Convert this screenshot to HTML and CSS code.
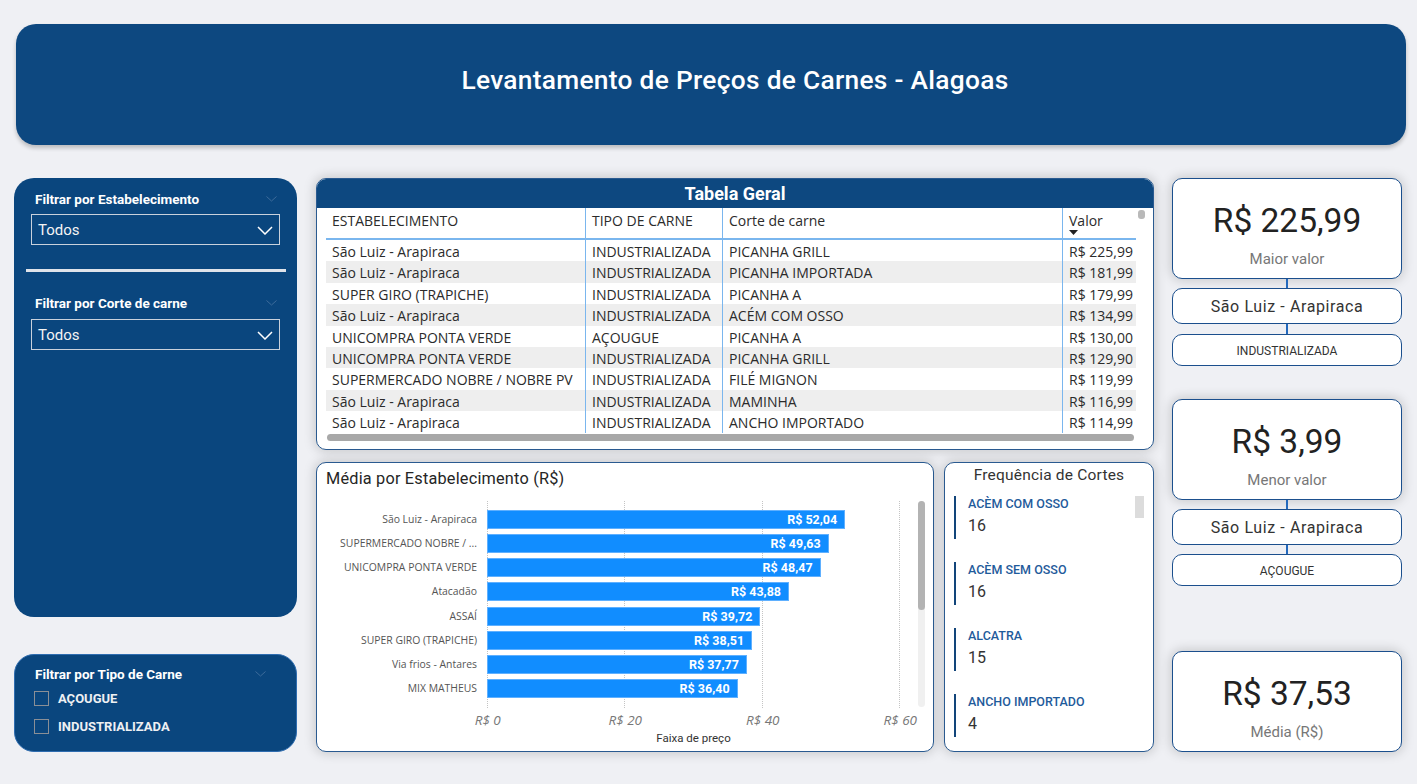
FILE: index.html
```html
<!DOCTYPE html>
<html lang="pt-BR">
<head>
<meta charset="utf-8">
<title>Levantamento de Preços de Carnes - Alagoas</title>
<link rel="stylesheet" href="styles.css">
</head>
<body>
<div class="page">
  <header class="banner">
    <h1>Levantamento de Preços de Carnes - Alagoas</h1>
  </header>

  <main class="main">
    <aside class="left">
      <section class="panel filters">
        <div class="slicer">
          <div class="slicer-head">
            <span>Filtrar por Estabelecimento</span>
            <svg class="faint-chev" width="11" height="6" viewBox="0 0 11 6"><polyline points="0.5,0.5 5.5,5 10.5,0.5" fill="none" stroke="#3d6b9b" stroke-width="1"/></svg>
          </div>
          <div class="dropdown">
            <span>Todos</span>
            <svg width="16" height="9" viewBox="0 0 16 9"><polyline points="1,1 8,8 15,1" fill="none" stroke="#ffffff" stroke-width="1.5"/></svg>
          </div>
        </div>
        <div class="sep"></div>
        <div class="slicer">
          <div class="slicer-head second">
            <span>Filtrar por Corte de carne</span>
            <svg class="faint-chev" width="11" height="6" viewBox="0 0 11 6"><polyline points="0.5,0.5 5.5,5 10.5,0.5" fill="none" stroke="#3d6b9b" stroke-width="1"/></svg>
          </div>
          <div class="dropdown">
            <span>Todos</span>
            <svg width="16" height="9" viewBox="0 0 16 9"><polyline points="1,1 8,8 15,1" fill="none" stroke="#ffffff" stroke-width="1.5"/></svg>
          </div>
        </div>
      </section>

      <section class="panel types">
        <div class="slicer-head types-head">
          <span>Filtrar por Tipo de Carne</span>
          <svg class="faint-chev" width="11" height="6" viewBox="0 0 11 6"><polyline points="0.5,0.5 5.5,5 10.5,0.5" fill="none" stroke="#3d6b9b" stroke-width="1"/></svg>
        </div>
        <label class="option"><span class="check"></span>AÇOUGUE</label>
        <label class="option"><span class="check"></span>INDUSTRIALIZADA</label>
      </section>
    </aside>

    <div class="center">
      <section class="card table-card">
        <div class="table-title">Tabela Geral</div>
        <div class="table-wrap">
          <div class="grid-table">
            <div class="row head">
              <div class="c c1">ESTABELECIMENTO</div>
              <div class="c c2">TIPO DE CARNE</div>
              <div class="c c3">Corte de carne</div>
              <div class="c c4 valor-head">Valor<svg class="sort" width="9" height="5" viewBox="0 0 9 5"><polygon points="0,0 9,0 4.5,5" fill="#222"/></svg></div>
            </div>
            <div class="row"><div class="c c1">São Luiz - Arapiraca</div><div class="c c2">INDUSTRIALIZADA</div><div class="c c3">PICANHA GRILL</div><div class="c c4">R$ 225,99</div></div>
            <div class="row"><div class="c c1">São Luiz - Arapiraca</div><div class="c c2">INDUSTRIALIZADA</div><div class="c c3">PICANHA IMPORTADA</div><div class="c c4">R$ 181,99</div></div>
            <div class="row"><div class="c c1">SUPER GIRO (TRAPICHE)</div><div class="c c2">INDUSTRIALIZADA</div><div class="c c3">PICANHA A</div><div class="c c4">R$ 179,99</div></div>
            <div class="row"><div class="c c1">São Luiz - Arapiraca</div><div class="c c2">INDUSTRIALIZADA</div><div class="c c3">ACÉM COM OSSO</div><div class="c c4">R$ 134,99</div></div>
            <div class="row"><div class="c c1">UNICOMPRA PONTA VERDE</div><div class="c c2">AÇOUGUE</div><div class="c c3">PICANHA A</div><div class="c c4">R$ 130,00</div></div>
            <div class="row"><div class="c c1">UNICOMPRA PONTA VERDE</div><div class="c c2">INDUSTRIALIZADA</div><div class="c c3">PICANHA GRILL</div><div class="c c4">R$ 129,90</div></div>
            <div class="row"><div class="c c1">SUPERMERCADO NOBRE / NOBRE PV</div><div class="c c2">INDUSTRIALIZADA</div><div class="c c3">FILÉ MIGNON</div><div class="c c4">R$ 119,99</div></div>
            <div class="row"><div class="c c1">São Luiz - Arapiraca</div><div class="c c2">INDUSTRIALIZADA</div><div class="c c3">MAMINHA</div><div class="c c4">R$ 116,99</div></div>
            <div class="row"><div class="c c1">São Luiz - Arapiraca</div><div class="c c2">INDUSTRIALIZADA</div><div class="c c3">ANCHO IMPORTADO</div><div class="c c4">R$ 114,99</div></div>
            <div class="hscroll"></div>
          </div>
          <div class="vthumb"></div>
        </div>
      </section>

      <div class="bottom-row">
        <section class="card chart-card">
          <div class="chart-title">Média por Estabelecimento (R$)</div>
          <div class="chart-body">
            <div class="ylabels">
              <div class="ylabel">São Luiz - Arapiraca</div>
              <div class="ylabel">SUPERMERCADO NOBRE / ...</div>
              <div class="ylabel">UNICOMPRA PONTA VERDE</div>
              <div class="ylabel">Atacadão</div>
              <div class="ylabel">ASSAÍ</div>
              <div class="ylabel">SUPER GIRO (TRAPICHE)</div>
              <div class="ylabel">Via frios - Antares</div>
              <div class="ylabel">MIX MATHEUS</div>
            </div>
            <div class="plot">
              <span class="gl g0"></span><span class="gl g1"></span><span class="gl g2"></span><span class="gl g3"></span>
              <div class="bars">
                <div class="bar-row"><div class="bar" style="width:86.73%">R$ 52,04</div></div>
                <div class="bar-row"><div class="bar" style="width:82.72%">R$ 49,63</div></div>
                <div class="bar-row"><div class="bar" style="width:80.78%">R$ 48,47</div></div>
                <div class="bar-row"><div class="bar" style="width:73.13%">R$ 43,88</div></div>
                <div class="bar-row"><div class="bar" style="width:66.20%">R$ 39,72</div></div>
                <div class="bar-row"><div class="bar" style="width:64.18%">R$ 38,51</div></div>
                <div class="bar-row"><div class="bar" style="width:62.95%">R$ 37,77</div></div>
                <div class="bar-row"><div class="bar" style="width:60.67%">R$ 36,40</div></div>
              </div>
            </div>
            <div class="vscroll"><div class="vscroll-thumb"></div></div>
            <div class="xaxis">
              <span>R$ 0</span><span>R$ 20</span><span>R$ 40</span><span>R$ 60</span>
            </div>
            <div class="xtitle">Faixa de preço</div>
          </div>
        </section>

        <section class="card freq-card">
          <div class="freq-title">Frequência de Cortes</div>
          <div class="freq-body">
            <div class="freq-list">
              <div class="freq-item"><div class="freq-label">ACÈM COM OSSO</div><div class="freq-value">16</div></div>
              <div class="freq-item"><div class="freq-label">ACÈM SEM OSSO</div><div class="freq-value">16</div></div>
              <div class="freq-item"><div class="freq-label">ALCATRA</div><div class="freq-value">15</div></div>
              <div class="freq-item"><div class="freq-label">ANCHO IMPORTADO</div><div class="freq-value">4</div></div>
            </div>
            <div class="freq-thumb"></div>
          </div>
        </section>
      </div>
    </div>

    <aside class="right">
      <div class="kpi-group">
        <div class="card kpi">
          <div class="kpi-value">R$ 225,99</div>
          <div class="kpi-label">Maior valor</div>
        </div>
        <div class="link"></div>
        <div class="card pill big">São Luiz - Arapiraca</div>
        <div class="link tall"></div>
        <div class="card pill small">INDUSTRIALIZADA</div>
      </div>

      <div class="kpi-group g2">
        <div class="card kpi">
          <div class="kpi-value">R$ 3,99</div>
          <div class="kpi-label">Menor valor</div>
        </div>
        <div class="link"></div>
        <div class="card pill big">São Luiz - Arapiraca</div>
        <div class="link"></div>
        <div class="card pill small">AÇOUGUE</div>
      </div>

      <div class="kpi-group g3">
        <div class="card kpi">
          <div class="kpi-value">R$ 37,53</div>
          <div class="kpi-label">Média (R$)</div>
        </div>
      </div>
    </aside>
  </main>
</div>
</body>
</html>
```
FILE: styles.css
```css
* { box-sizing: border-box; }

body {
  margin: 0;
  background: #eff0f4;
  font-family: Roboto, "Liberation Sans", sans-serif;
  color: #252525;
}

.page {
  width: 1417px;
  height: 784px;
  padding: 24px 0 0 14px;
  overflow: hidden;
}

/* ---------- banner ---------- */
.banner {
  margin-left: 2px;
  width: 1390px;
  height: 121px;
  background: #0d4880;
  border-radius: 20px;
  box-shadow: 0 3px 4px rgba(0, 0, 0, 0.22);
  display: flex;
  align-items: center;
  justify-content: center;
  padding: 0 0 9px 48px;
}
.banner h1 {
  margin: 0;
  color: #fff;
  font-size: 26.3px;
  font-weight: 500;
  letter-spacing: 0.3px;
}

.main {
  display: flex;
  margin-top: 33px;
}

/* ---------- left filters ---------- */
.left {
  width: 283px;
  display: flex;
  flex-direction: column;
}
.panel {
  background: #0a467e;
  border-radius: 20px;
  color: #fff;
}
.filters {
  height: 439px;
  padding-top: 11px;
}
.slicer { padding: 0 17px; }
.slicer-head {
  display: flex;
  align-items: center;
  justify-content: space-between;
  height: 20px;
  padding: 0 3px 0 4px;
  font-size: 13.5px;
  font-weight: 700;
  margin-bottom: 5px;
}
.slicer-head.second { margin-bottom: 6px; }
.dropdown {
  height: 31px;
  border: 1.5px solid #c9d1dc;
  display: flex;
  align-items: center;
  justify-content: space-between;
  padding: 1px 6px 0 6px;
  font-size: 15px;
  color: #f4f4f4;
}
.sep {
  height: 3px;
  background: #dfe3ea;
  margin: 24px 11px 21px 12px;
}
.types {
  margin-top: 37px;
  height: 98px;
  border: 1px solid #2f6db0;
  padding: 9px 30px 0 19px;
}
.types-head {
  padding: 0 0 0 1px;
  margin-bottom: 0;
}
.option {
  display: flex;
  align-items: center;
  height: 28px;
  font-size: 13px;
  font-weight: 700;
  color: #eef0f3;
}
.check {
  width: 15px;
  height: 15px;
  border: 1px solid #8a8f96;
  margin-right: 9px;
}

/* ---------- cards ---------- */
.card {
  background: #fff;
  border: 1px solid #2a5a90;
  border-radius: 10px;
  box-shadow: 0 0 12px 1px rgba(0, 0, 0, 0.18);
}

.center {
  width: 838px;
  margin-left: 19px;
}

/* table */
.table-card {
  height: 272px;
  overflow: hidden;
}
.table-title {
  height: 29px;
  line-height: 29px;
  background: #0d4880;
  color: #fff;
  text-align: center;
  font-size: 18px;
  font-weight: 700;
}
.table-wrap {
  display: flex;
  padding-left: 9px;
}
.grid-table {
  width: 810px;
  font-family: "Open Sans", "Noto Sans", sans-serif;
  font-size: 14px;
  color: #2b2b2b;
}
.row {
  display: flex;
  height: 21.4px;
}
.row:nth-child(odd) { background: #eeeeee; }
.row.head {
  height: 32px;
  background: #fff;
  border-bottom: 2px solid #7ab6ee;
}
.c {
  padding: 1px 6px 0;
  line-height: 22px;
  white-space: nowrap;
  overflow: hidden;
}
.head .c {
  line-height: 18px;
  padding-top: 4px;
}
.c1 { width: 259px; }
.c2 { width: 137px; border-left: 1px solid #7ab6ee; }
.c3 { width: 340px; border-left: 1px solid #7ab6ee; }
.c4 { width: 74px; border-left: 1px solid #7ab6ee; text-align: right; padding: 1px 3px 0 4px; }
.head .c4 { text-align: left; padding-left: 6px; }
.valor-head { display: flex; flex-direction: column; }
.hscroll {
  margin: 1.5px 0 0 1px;
  width: 807px;
  height: 7px;
  border-radius: 4px;
  background: #a8a8a8;
}
.vthumb {
  margin: 2px 0 0 2px;
  width: 7px;
  height: 9px;
  border-radius: 3px;
  background: #b9b9b9;
}

/* bottom row */
.bottom-row {
  display: flex;
  margin-top: 12px;
}
.chart-card {
  width: 618px;
  height: 290px;
  padding: 5px 0 0 9px;
}
.chart-title {
  font-size: 16.3px;
  line-height: 22px;
  color: #252525;
  letter-spacing: 0.2px;
}
.chart-body {
  display: grid;
  grid-template-columns: 151px 413px 7px;
  grid-template-rows: 207px 22px 18px;
  column-gap: 10px;
  margin-top: 11px;
}
.ylabels {
  padding-top: 9px;
  font-family: "Open Sans", "Noto Sans", sans-serif;
  font-size: 10.4px;
  color: #555;
  text-align: right;
}
.ylabel {
  height: 24.15px;
  line-height: 19px;
  white-space: nowrap;
}
.plot {
  position: relative;
}
.gl {
  position: absolute;
  top: 0;
  bottom: 0;
  border-left: 1px dotted #c4c4c4;
}
.g0 { left: 0; }
.g1 { left: 137px; }
.g2 { left: 275px; }
.g3 { left: 412px; }
.bars {
  position: relative;
  padding-top: 9px;
}
.bar-row { height: 24.15px; }
.bar {
  height: 19px;
  background: #118dff;
  border: 1px solid #5fb0ff;
  color: #fff;
  font-size: 12.5px;
  font-weight: 700;
  line-height: 17px;
  text-align: right;
  padding-right: 7px;
  white-space: nowrap;
}
.vscroll {
  margin-left: 8px;
  width: 7px;
  height: 206px;
  border-radius: 4px;
  background: #f0f0f0;
}
.vscroll-thumb {
  height: 109px;
  border-radius: 4px;
  background: #b3b3b3;
}
.xaxis {
  grid-column: 2;
  display: flex;
  margin-left: -68px;
  margin-right: -70px;
  padding-top: 3px;
}
.xaxis span {
  flex: 0 0 137.5px;
  text-align: center;
  font-family: "Open Sans", "Noto Sans", sans-serif;
  font-style: italic;
  font-size: 13.5px;
  color: #777;
  line-height: 18px;
}
.xtitle {
  grid-column: 2;
  text-align: center;
  font-size: 11.5px;
  color: #333;
  line-height: 16px;
}

.freq-card {
  width: 210px;
  height: 290px;
  margin-left: 10px;
  overflow: hidden;
}
.freq-title {
  margin-top: 1px;
  text-align: center;
  font-size: 15.5px;
  line-height: 22px;
  color: #333;
  letter-spacing: 0.2px;
}
.freq-body {
  display: flex;
  margin-top: 10px;
  padding-left: 9px;
}
.freq-list { flex: 1; }
.freq-item {
  height: 43px;
  margin-bottom: 23px;
  border-left: 2.5px solid #12457a;
  padding-left: 12px;
}
.freq-label {
  font-size: 12.5px;
  font-weight: 500;
  line-height: 15px;
  color: #1f5b9b;
}
.freq-value {
  margin-top: 5px;
  font-size: 16px;
  line-height: 20px;
  color: #333;
}
.freq-thumb {
  width: 9px;
  height: 22px;
  margin-right: 9px;
  background: #dcdcdc;
}

/* ---------- right KPIs ---------- */
.right {
  width: 230px;
  margin-left: 18px;
}
.kpi-group {
  display: flex;
  flex-direction: column;
  align-items: center;
}
.kpi-group.g2 { margin-top: 33px; }
.kpi-group.g3 { margin-top: 65px; }
.kpi {
  width: 100%;
  height: 101px;
  border-color: #1b4f8d;
  display: flex;
  flex-direction: column;
  align-items: center;
  padding-top: 22px;
}
.kpi-value {
  font-size: 33.5px;
  line-height: 40px;
  color: #222;
}
.kpi-label {
  margin-top: 8px;
  font-size: 15px;
  line-height: 20px;
  color: #777;
}
.link {
  width: 2px;
  height: 9px;
  background: #2369bd;
}
.link.tall { height: 10px; }
.pill {
  width: 100%;
  border-color: #1b4f8d;
  box-shadow: none;
  display: flex;
  align-items: center;
  justify-content: center;
  color: #333;
}
.pill.big {
  height: 36px;
  font-size: 16px;
  letter-spacing: 0.6px;
}
.pill.small {
  height: 32px;
  font-size: 12px;
  font-weight: 400;
  padding-top: 2px;
}
```
